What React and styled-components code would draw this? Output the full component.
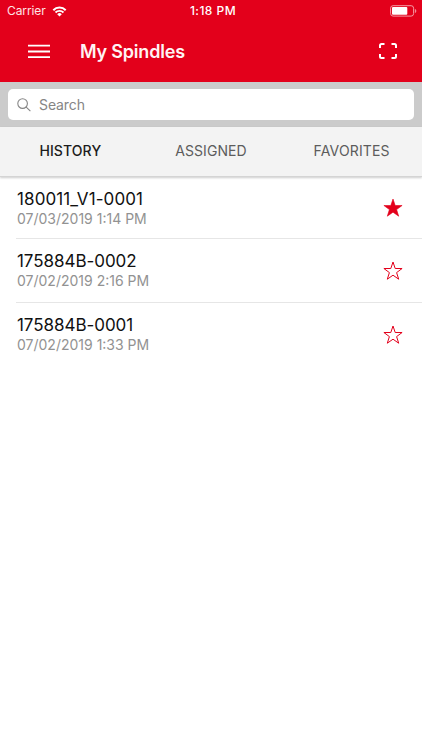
import React, { useState } from "react";
import styled, { createGlobalStyle } from "styled-components";

const GlobalStyle = createGlobalStyle`
  * {
    box-sizing: border-box;
  }

  body {
    margin: 0;
    background: #fff;
    font-family: Inter, "Liberation Sans", sans-serif;
  }
`;

const Screen = styled.div`
  width: 100%;
  min-height: 750px;
  background: #fff;
  overflow: hidden;
`;

const Header = styled.header`
  height: 82px;
  background: #e3001b;
  color: #fff;
`;

const StatusBar = styled.div`
  display: grid;
  grid-template-columns: 1fr auto 1fr;
  align-items: center;
  height: 21px;
  padding: 0 5px 0 7px;
`;

const Carrier = styled.div`
  display: flex;
  align-items: center;
  gap: 6px;
  font-size: 12px;
  line-height: 22px;
  letter-spacing: -0.1px;
  color: #ffe3e6;
`;

const Clock = styled.div`
  padding-left: 2px;
  font-size: 12px;
  font-weight: 500;
  line-height: 22px;
  letter-spacing: 0.45px;
  color: #fff;
`;

const BatteryIcon = styled.svg`
  display: block;
  justify-self: end;
`;

const NavBar = styled.div`
  display: flex;
  align-items: center;
  height: 60px;
  padding: 0 24px 0 28px;
`;

const IconButton = styled.button`
  display: flex;
  padding: 0;
  border: none;
  background: none;
  color: #fff;
`;

const Title = styled.h1`
  flex: 1;
  margin: 2px 0 0 30px;
  font-size: 18px;
  font-weight: 600;
  line-height: 24px;
  letter-spacing: -0.2px;
  color: #fff3f4;
`;

const SearchBar = styled.div`
  height: 44.5px;
  padding: 7px 8px 6.5px;
  background: #cbcbcb;
`;

const SearchField = styled.label`
  display: flex;
  align-items: center;
  gap: 8px;
  height: 31px;
  padding: 0 9px;
  border-radius: 5px;
  background: #fff;
`;

const SearchInput = styled.input`
  flex: 1;
  padding: 0;
  border: none;
  outline: none;
  font-family: inherit;
  font-size: 14px;
  letter-spacing: -0.1px;
  color: #333;

  &::placeholder {
    color: #858585;
    opacity: 1;
  }
`;

const Tabs = styled.nav`
  display: grid;
  grid-template-columns: repeat(3, 1fr);
  height: 50px;
  background: #f3f3f3;
  border-bottom: 1px solid #d4d4d4;
  box-shadow: 0 1px 2px rgba(0, 0, 0, 0.2);
`;

const Tab = styled.button`
  padding: 0 0 2px;
  border: none;
  background: none;
  font-family: inherit;
  font-size: 14px;
  font-weight: ${(props) => (props.$active ? 500 : 400)};
  letter-spacing: ${(props) => props.$spacing};
  color: ${(props) => (props.$active ? "#1c1c1c" : "#5c5c5c")};
`;

const List = styled.ul`
  margin: 0;
  padding: 1.5px 0 0 16px;
  list-style: none;
`;

const Row = styled.li`
  display: flex;
  align-items: center;
  justify-content: space-between;
  height: ${(props) => (props.$first ? "61px" : "64px")};
  padding: ${(props) => (props.$first ? "0 19px 0 1px" : "0 19px 0 1px")};
  border-bottom: 1px solid ${(props) => (props.$last ? "#fff" : "#e6e6e6")};
`;

const RowText = styled.div`
  display: flex;
  flex-direction: column;
`;

const Serial = styled.span`
  font-size: 17px;
  line-height: 20px;
  letter-spacing: ${(props) => props.$spacing};
  color: #111;
`;

const DateText = styled.span`
  font-size: 14px;
  line-height: 19px;
  color: #929292;
`;

const tabs = [
  { label: "HISTORY", spacing: "0.1px" },
  { label: "ASSIGNED", spacing: "0.05px" },
  { label: "FAVORITES", spacing: "0.15px" },
];

const spindles = [
  {
    serial: "180011_V1-0001",
    date: "07/03/2019 1:14 PM",
    spacing: "0.1px",
    favorite: true,
  },
  {
    serial: "175884B-0002",
    date: "07/02/2019 2:16 PM",
    spacing: "-0.05px",
    favorite: false,
  },
  {
    serial: "175884B-0001",
    date: "07/02/2019 1:33 PM",
    spacing: "-0.05px",
    favorite: false,
  },
];

const WifiIcon = () => (
  <svg width="15" height="11" viewBox="0 0 14 11" fill="none">
    <path d="M0.8 4.2a8.7 8.7 0 0 1 12.4 0" stroke="#fff" strokeWidth="2" />
    <path d="M3 6.5a5.6 5.6 0 0 1 8 0" stroke="#fff" strokeWidth="1.8" />
    <path d="M7 10.6 4.7 8.3a3.2 3.2 0 0 1 4.6 0z" fill="#fff" />
  </svg>
);

const Battery = () => (
  <BatteryIcon width="27" height="12" viewBox="0 0 27 12" fill="none">
    <rect x="0.6" y="0.7" width="23" height="10.4" rx="2.5" stroke="#f59aa4" />
    <rect x="2" y="2.1" width="15.3" height="7.6" rx="1" fill="#fff" />
    <path d="M24.9 4v4c.9-.4 1.4-1.1 1.4-2s-.5-1.6-1.4-2z" fill="#f28c97" />
  </BatteryIcon>
);

const MenuIcon = () => (
  <svg width="22" height="15" viewBox="0 0 22 15">
    <path
      d="M0 1.6h22M0 7.5h22M0 13.2h22"
      stroke="#fff"
      strokeWidth="1.8"
    />
  </svg>
);

const ScanIcon = () => (
  <svg
    width="20"
    height="18"
    viewBox="0 0 20 18"
    fill="none"
    stroke="#fff"
    strokeWidth="2"
  >
    <path d="M2 6V3.5Q2 2 3.5 2H6.5M13.5 2H16.5Q18 2 18 3.5V6M18 12V14.5Q18 16 16.5 16H13.5M6.5 16H3.5Q2 16 2 14.5V12" />
  </svg>
);

const SearchIcon = () => (
  <svg
    width="14"
    height="14"
    viewBox="0 0 14 14"
    fill="none"
    stroke="#858585"
    strokeWidth="1.1"
  >
    <circle cx="5.6" cy="5.6" r="4.8" />
    <path d="M9.2 9.2l4.2 4" />
  </svg>
);

const StarIcon = ({ filled }) => (
  <svg
    width="20"
    height="20"
    viewBox="0 0 20 20"
    fill={filled ? "#e3001b" : "none"}
    stroke="#e3001b"
    strokeWidth={filled ? 0.6 : 1}
  >
    <path d="M10 1L12.2 7.5H19.1L13.6 11.6L15.7 18.2L10 14.2L4.3 18.2L6.4 11.6L0.9 7.5H7.8Z" />
  </svg>
);

const App = () => {
  const [activeTab, setActiveTab] = useState("HISTORY");

  return (
    <Screen>
      <GlobalStyle />
      <Header>
        <StatusBar>
          <Carrier>
            Carrier
            <WifiIcon />
          </Carrier>
          <Clock>1:18 PM</Clock>
          <Battery />
        </StatusBar>
        <NavBar>
          <IconButton aria-label="Menu">
            <MenuIcon />
          </IconButton>
          <Title>My Spindles</Title>
          <IconButton aria-label="Scan">
            <ScanIcon />
          </IconButton>
        </NavBar>
      </Header>

      <SearchBar>
        <SearchField>
          <SearchIcon />
          <SearchInput placeholder="Search" />
        </SearchField>
      </SearchBar>

      <Tabs>
        {tabs.map((tab) => (
          <Tab
            key={tab.label}
            $active={tab.label === activeTab}
            $spacing={tab.spacing}
            onClick={() => setActiveTab(tab.label)}
          >
            {tab.label}
          </Tab>
        ))}
      </Tabs>

      <List>
        {spindles.map((spindle, index) => (
          <Row
            key={spindle.serial}
            $first={index === 0}
            $last={index === spindles.length - 1}
          >
            <RowText>
              <Serial $spacing={spindle.spacing}>{spindle.serial}</Serial>
              <DateText>{spindle.date}</DateText>
            </RowText>
            <StarIcon filled={spindle.favorite} />
          </Row>
        ))}
      </List>
    </Screen>
  );
};

export default App;
